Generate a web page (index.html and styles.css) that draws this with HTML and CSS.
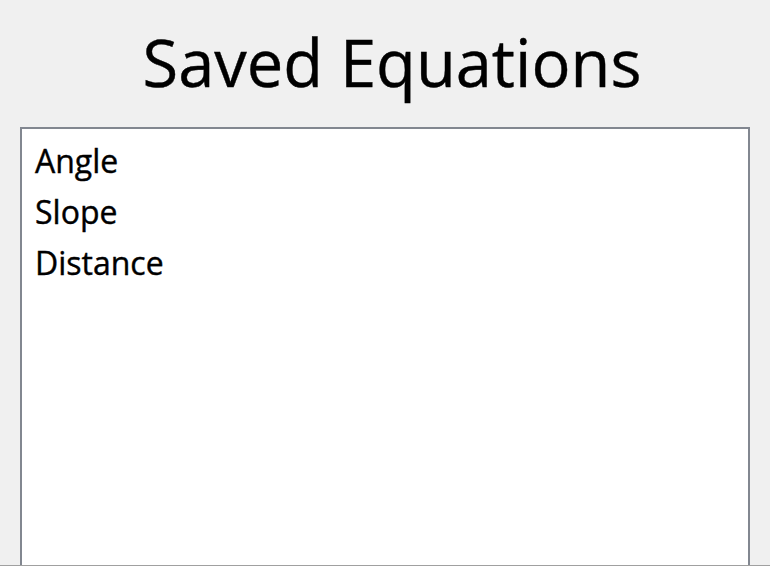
FILE: index.html
```html
<!DOCTYPE html>
<html>
<head>
<meta charset="utf-8">
<link rel="stylesheet" href="styles.css">
</head>
<body>
<div class="window">
  <h1 class="title">Saved Equations</h1>
  <div class="listbox">
    <div class="item">Angle</div>
    <div class="item">Slope</div>
    <div class="item">Distance</div>
  </div>
</div>
</body>
</html>
```
FILE: styles.css
```css
html, body {
  margin: 0;
  padding: 0;
  width: 770px;
  height: 566px;
  overflow: hidden;
  background: #f0f0f0;
}
.window {
  height: 565px;
  border-bottom: 1px solid #a0a0a0;
  display: flex;
  flex-direction: column;
  overflow: hidden;
}
.title {
  margin: 0;
  padding-top: 20px;
  padding-left: 14px;
  height: 107px;
  box-sizing: border-box;
  text-align: center;
  font-family: "Open Sans", "Noto Sans", sans-serif;
  font-weight: 400;
  font-size: 65px;
  line-height: 84px;
  color: #000;
  -webkit-text-stroke: 0.4px #000;
}
.listbox {
  margin-left: 20px;
  width: 730px;
  flex: 1;
  box-sizing: border-box;
  background: #fff;
  border: 2px solid #828790;
  border-bottom: none;
  padding: 6px 0 0 13px;
  margin-top: 20px;
}
.item {
  font-family: "Open Sans", "Noto Sans", sans-serif;
  font-size: 32px;
  line-height: 51px;
  height: 51px;
  color: #000;
  -webkit-text-stroke: 0.4px #000;
}
```
